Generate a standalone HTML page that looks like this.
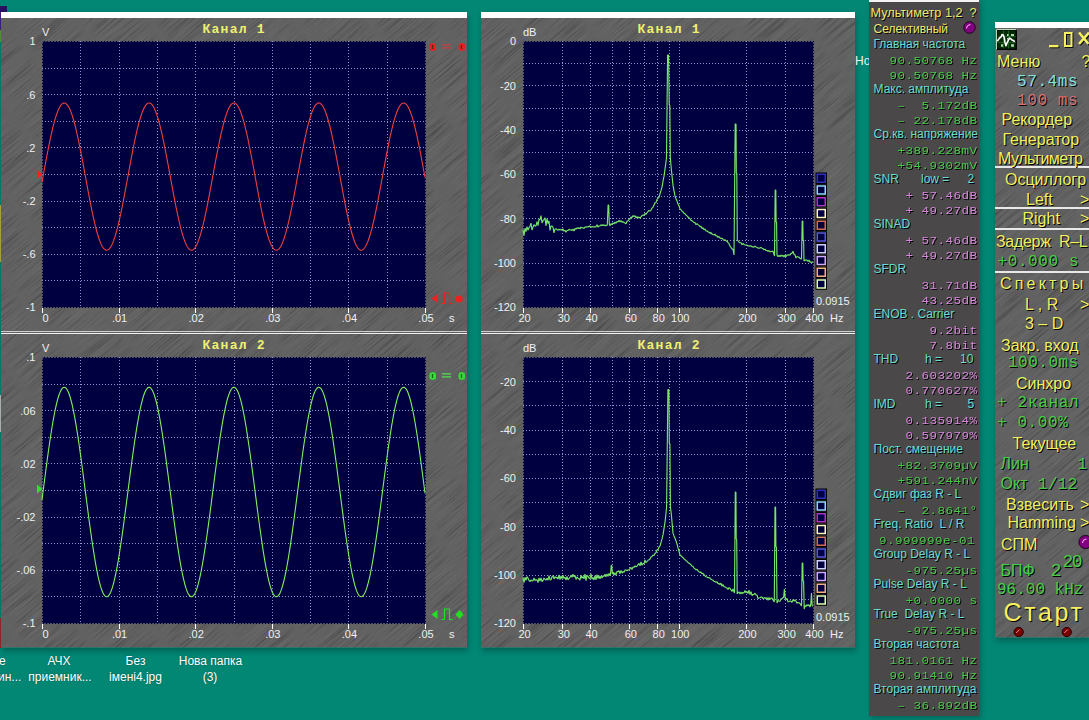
<!DOCTYPE html><html><head><meta charset="utf-8"><style>
*{margin:0;padding:0;box-sizing:border-box}
html,body{width:1089px;height:720px;overflow:hidden;background:#028775;position:relative;font-family:"Liberation Sans",sans-serif}
.a{position:absolute;white-space:pre;line-height:1}
.wb{background:#fff}
.sh{text-shadow:1px 1px 0 #000}
</style></head><body><div class="a" style="left:0px;top:6px;width:7px;height:6px;background:#2a1060"></div>
<div class="a" style="left:0px;top:12px;width:1.5px;height:18px;background:#40208a"></div>
<div class="a" style="left:0px;top:30px;width:1.5px;height:12px;background:#5a9a40"></div>
<div class="a" style="left:0px;top:205px;width:1.5px;height:57px;background:#b8b040"></div>
<div class="a" style="left:0px;top:395px;width:1.5px;height:37px;background:#b8c0c0"></div>
<div class="a" style="left:0px;top:618px;width:1.5px;height:30px;background:#a02828"></div>
<div class="a" style="left:1px;top:12px;width:466px;height:635.5px;box-shadow:1px 3px 6px rgba(0,0,0,.28)"></div>
<div class="a" style="left:481px;top:12px;width:374px;height:635.5px;box-shadow:1px 3px 6px rgba(0,0,0,.28)"></div>
<div class="a" style="left:995px;top:22px;width:94px;height:615.5px;box-shadow:1px 3px 6px rgba(0,0,0,.28)"></div>
<svg class="a" style="left:0;top:0" width="1089" height="720" viewBox="0 0 1089 720"><defs><filter id="brush" x="-600" y="-600" width="2400" height="2000" filterUnits="userSpaceOnUse" color-interpolation-filters="sRGB"><feTurbulence type="fractalNoise" baseFrequency="1.0 0.018" numOctaves="3" seed="4"/><feColorMatrix type="matrix" values="1 0 0 0 0  1 0 0 0 0  1 0 0 0 0  0 0 0 0 1"/><feComponentTransfer><feFuncR type="table" tableValues="0.2 0.315 0.385 0.412 0.432"/><feFuncG type="table" tableValues="0.2 0.315 0.385 0.412 0.432"/><feFuncB type="table" tableValues="0.2 0.315 0.385 0.412 0.432"/></feComponentTransfer></filter><clipPath id="cp"><rect x="1" y="18" width="466" height="629.5"/><rect x="481" y="18" width="374" height="629.5"/><rect x="995" y="28" width="94" height="609.5"/></clipPath></defs><g clip-path="url(#cp)"><g transform="rotate(50 544 360)"><rect x="-600" y="-600" width="2400" height="2000" filter="url(#brush)"/></g></g></svg>
<div class="a wb" style="left:1px;top:12px;width:466px;height:6px"></div>
<div class="a" style="left:1px;top:331px;width:466px;height:1px;background:#cfcfcf"></div>
<div class="a" style="left:1px;top:333px;width:466px;height:1px;background:#f0f0f0"></div>
<div class="a wb" style="left:481px;top:12px;width:374px;height:6px"></div>
<div class="a" style="left:481px;top:331px;width:374px;height:1px;background:#cfcfcf"></div>
<div class="a" style="left:481px;top:333px;width:374px;height:1px;background:#f0f0f0"></div>
<div class="a" style="top:26.65px;font-size:11px;color:#f0f0f0;left:42px;">V</div>
<div class="a" style="top:36.45px;font-size:11px;color:#f0f0f0;right:1053.5px;">1</div>
<div class="a" style="top:89.65px;font-size:11px;color:#f0f0f0;right:1053.5px;">.6</div>
<div class="a" style="top:142.85px;font-size:11px;color:#f0f0f0;right:1053.5px;">.2</div>
<div class="a" style="top:196.05px;font-size:11px;color:#f0f0f0;right:1053.5px;">-.2</div>
<div class="a" style="top:249.25px;font-size:11px;color:#f0f0f0;right:1053.5px;">-.6</div>
<div class="a" style="top:302.45px;font-size:11px;color:#f0f0f0;right:1053.5px;">-1</div>
<div class="a" style="top:313.15px;font-size:11px;color:#f0f0f0;left:42.5px;">0</div>
<div class="a" style="top:313.15px;font-size:11px;color:#f0f0f0;left:119.6px;transform:translateX(-50%);">.01</div>
<div class="a" style="top:313.15px;font-size:11px;color:#f0f0f0;left:196.2px;transform:translateX(-50%);">.02</div>
<div class="a" style="top:313.15px;font-size:11px;color:#f0f0f0;left:272.8px;transform:translateX(-50%);">.03</div>
<div class="a" style="top:313.15px;font-size:11px;color:#f0f0f0;left:349.4px;transform:translateX(-50%);">.04</div>
<div class="a" style="top:313.15px;font-size:11px;color:#f0f0f0;left:426px;transform:translateX(-50%);">.05</div>
<div class="a" style="top:313.15px;font-size:11px;color:#f0f0f0;left:449px;">s</div>
<div class="a" style="top:342.65px;font-size:11px;color:#f0f0f0;left:42px;">V</div>
<div class="a" style="top:352.45px;font-size:11px;color:#f0f0f0;right:1053.5px;">.1</div>
<div class="a" style="top:405.65px;font-size:11px;color:#f0f0f0;right:1053.5px;">.06</div>
<div class="a" style="top:458.85px;font-size:11px;color:#f0f0f0;right:1053.5px;">.02</div>
<div class="a" style="top:512.05px;font-size:11px;color:#f0f0f0;right:1053.5px;">-.02</div>
<div class="a" style="top:565.25px;font-size:11px;color:#f0f0f0;right:1053.5px;">-.06</div>
<div class="a" style="top:618.45px;font-size:11px;color:#f0f0f0;right:1053.5px;">-.1</div>
<div class="a" style="top:629.15px;font-size:11px;color:#f0f0f0;left:42.5px;">0</div>
<div class="a" style="top:629.15px;font-size:11px;color:#f0f0f0;left:119.6px;transform:translateX(-50%);">.01</div>
<div class="a" style="top:629.15px;font-size:11px;color:#f0f0f0;left:196.2px;transform:translateX(-50%);">.02</div>
<div class="a" style="top:629.15px;font-size:11px;color:#f0f0f0;left:272.8px;transform:translateX(-50%);">.03</div>
<div class="a" style="top:629.15px;font-size:11px;color:#f0f0f0;left:349.4px;transform:translateX(-50%);">.04</div>
<div class="a" style="top:629.15px;font-size:11px;color:#f0f0f0;left:426px;transform:translateX(-50%);">.05</div>
<div class="a" style="top:629.15px;font-size:11px;color:#f0f0f0;left:449px;">s</div>
<div class="a" style="top:23.12px;font-size:13px;color:#f0f070;font-family:'Liberation Mono',monospace;letter-spacing:1.25px;font-weight:bold;left:202.5px;">Канал 1</div>
<div class="a" style="top:23.12px;font-size:13px;color:#f0f070;font-family:'Liberation Mono',monospace;letter-spacing:1.25px;font-weight:bold;left:637.5px;">Канал 1</div>
<div class="a" style="top:339.12px;font-size:13px;color:#f0f070;font-family:'Liberation Mono',monospace;letter-spacing:1.25px;font-weight:bold;left:202.5px;">Канал 2</div>
<div class="a" style="top:339.12px;font-size:13px;color:#f0f070;font-family:'Liberation Mono',monospace;letter-spacing:1.25px;font-weight:bold;left:637.5px;">Канал 2</div>
<div class="a" style="top:313.15px;font-size:11px;color:#f0f0f0;left:524.5px;transform:translateX(-50%);">20</div>
<div class="a" style="top:313.15px;font-size:11px;color:#f0f0f0;left:563.75px;transform:translateX(-50%);">30</div>
<div class="a" style="top:313.15px;font-size:11px;color:#f0f0f0;left:591.6px;transform:translateX(-50%);">40</div>
<div class="a" style="top:313.15px;font-size:11px;color:#f0f0f0;left:630.85px;transform:translateX(-50%);">60</div>
<div class="a" style="top:313.15px;font-size:11px;color:#f0f0f0;left:658.7px;transform:translateX(-50%);">80</div>
<div class="a" style="top:313.15px;font-size:11px;color:#f0f0f0;left:680.3px;transform:translateX(-50%);">100</div>
<div class="a" style="top:313.15px;font-size:11px;color:#f0f0f0;left:747.4px;transform:translateX(-50%);">200</div>
<div class="a" style="top:313.15px;font-size:11px;color:#f0f0f0;left:786.65px;transform:translateX(-50%);">300</div>
<div class="a" style="top:313.15px;font-size:11px;color:#f0f0f0;left:814.5px;transform:translateX(-50%);">400</div>
<div class="a" style="top:313.15px;font-size:11px;color:#f0f0f0;left:830px;">Hz</div>
<div class="a" style="top:26.65px;font-size:11px;color:#f0f0f0;left:523px;">dB</div>
<div class="a" style="top:36.45px;font-size:11px;color:#f0f0f0;right:573px;">0</div>
<div class="a" style="top:80.78px;font-size:11px;color:#f0f0f0;right:573px;">-20</div>
<div class="a" style="top:125.12px;font-size:11px;color:#f0f0f0;right:573px;">-40</div>
<div class="a" style="top:169.45px;font-size:11px;color:#f0f0f0;right:573px;">-60</div>
<div class="a" style="top:213.78px;font-size:11px;color:#f0f0f0;right:573px;">-80</div>
<div class="a" style="top:258.12px;font-size:11px;color:#f0f0f0;right:573px;">-100</div>
<div class="a" style="top:302.45px;font-size:11px;color:#f0f0f0;right:573px;">-120</div>
<div class="a" style="top:295.65px;font-size:11px;color:#f0f0f0;left:816px;">0.0915</div>
<div class="a" style="top:629.15px;font-size:11px;color:#f0f0f0;left:524.5px;transform:translateX(-50%);">20</div>
<div class="a" style="top:629.15px;font-size:11px;color:#f0f0f0;left:563.75px;transform:translateX(-50%);">30</div>
<div class="a" style="top:629.15px;font-size:11px;color:#f0f0f0;left:591.6px;transform:translateX(-50%);">40</div>
<div class="a" style="top:629.15px;font-size:11px;color:#f0f0f0;left:630.85px;transform:translateX(-50%);">60</div>
<div class="a" style="top:629.15px;font-size:11px;color:#f0f0f0;left:658.7px;transform:translateX(-50%);">80</div>
<div class="a" style="top:629.15px;font-size:11px;color:#f0f0f0;left:680.3px;transform:translateX(-50%);">100</div>
<div class="a" style="top:629.15px;font-size:11px;color:#f0f0f0;left:747.4px;transform:translateX(-50%);">200</div>
<div class="a" style="top:629.15px;font-size:11px;color:#f0f0f0;left:786.65px;transform:translateX(-50%);">300</div>
<div class="a" style="top:629.15px;font-size:11px;color:#f0f0f0;left:814.5px;transform:translateX(-50%);">400</div>
<div class="a" style="top:629.15px;font-size:11px;color:#f0f0f0;left:830px;">Hz</div>
<div class="a" style="top:342.65px;font-size:11px;color:#f0f0f0;left:523px;">dB</div>
<div class="a" style="top:376.63px;font-size:11px;color:#f0f0f0;right:573px;">-20</div>
<div class="a" style="top:425px;font-size:11px;color:#f0f0f0;right:573px;">-40</div>
<div class="a" style="top:473.36px;font-size:11px;color:#f0f0f0;right:573px;">-60</div>
<div class="a" style="top:521.72px;font-size:11px;color:#f0f0f0;right:573px;">-80</div>
<div class="a" style="top:570.09px;font-size:11px;color:#f0f0f0;right:573px;">-100</div>
<div class="a" style="top:618.45px;font-size:11px;color:#f0f0f0;right:573px;">-120</div>
<div class="a" style="top:611.65px;font-size:11px;color:#f0f0f0;left:816px;">0.0915</div>
<div class="a" style="top:654.8px;font-size:12px;color:#ffffff;left:-1px;text-shadow:0 0 2px rgba(0,0,0,.35);">е</div>
<div class="a" style="top:670.8px;font-size:12px;color:#ffffff;left:-2px;text-shadow:0 0 2px rgba(0,0,0,.35);">ин...</div>
<div class="a" style="top:654.8px;font-size:12px;color:#fff;left:59px;transform:translateX(-50%);text-shadow:0 0 2px rgba(0,0,0,.35);">АЧХ</div>
<div class="a" style="top:670.8px;font-size:12px;color:#fff;left:60px;transform:translateX(-50%);text-shadow:0 0 2px rgba(0,0,0,.35);">приемник...</div>
<div class="a" style="top:654.8px;font-size:12px;color:#fff;left:135.5px;transform:translateX(-50%);text-shadow:0 0 2px rgba(0,0,0,.35);">Без</div>
<div class="a" style="top:670.8px;font-size:12px;color:#fff;left:135.5px;transform:translateX(-50%);text-shadow:0 0 2px rgba(0,0,0,.35);">імені4.jpg</div>
<div class="a" style="top:654.8px;font-size:12px;color:#fff;left:210.5px;transform:translateX(-50%);text-shadow:0 0 2px rgba(0,0,0,.35);">Нова папка</div>
<div class="a" style="top:670.8px;font-size:12px;color:#fff;left:210px;transform:translateX(-50%);text-shadow:0 0 2px rgba(0,0,0,.35);">(3)</div>
<div class="a" style="top:54.8px;font-size:12px;color:#e8f8f0;left:855px;">Но</div>
<div class="a" style="left:869px;top:0;width:110px;height:716px;background:#4a4849;box-shadow:2px 2px 5px rgba(0,0,0,.25)"></div>
<div class="a" style="left:869px;top:0;width:110px;height:2px;background:#f4f4f4"></div>
<div class="a sh" style="top:6.81px;font-size:12.7px;color:#f0e868;left:870.5px;">Мультиметр 1,2</div>
<div class="a sh" style="top:6.81px;font-size:12.7px;color:#f0e868;left:969.5px;">?</div>
<div class="a sh" style="top:23.1px;font-size:12px;color:#f0e868;left:873.5px;">Селективный</div>
<div class="a sh" style="top:38.1px;font-size:12px;color:#66dcd4;left:873.5px;">Главная частота</div>
<div class="a sh" style="top:54.62px;font-size:12.6px;color:#48cc48;font-family:'Liberation Mono',monospace;letter-spacing:0.45px;right:111.5px;transform:scaleY(0.92);transform-origin:0 9.58px;">90.50768 Hz</div>
<div class="a sh" style="top:69.62px;font-size:12.6px;color:#48cc48;font-family:'Liberation Mono',monospace;letter-spacing:0.45px;right:111.5px;transform:scaleY(0.92);transform-origin:0 9.58px;">90.50768 Hz</div>
<div class="a sh" style="top:83.1px;font-size:12px;color:#66dcd4;left:873.5px;">Макс. амплитуда</div>
<div class="a sh" style="top:99.62px;font-size:12.6px;color:#48cc48;font-family:'Liberation Mono',monospace;letter-spacing:0.45px;right:111.5px;transform:scaleY(0.92);transform-origin:0 9.58px;">–  5.172dB</div>
<div class="a sh" style="top:114.62px;font-size:12.6px;color:#48cc48;font-family:'Liberation Mono',monospace;letter-spacing:0.45px;right:111.5px;transform:scaleY(0.92);transform-origin:0 9.58px;">– 22.178dB</div>
<div class="a" style="left:873.5px;top:128.1px;width:104px;overflow:hidden;font-size:12px;color:#66dcd4;text-shadow:1px 1px 0 #000">Ср.кв. напряжение</div>
<div class="a sh" style="top:144.62px;font-size:12.6px;color:#48cc48;font-family:'Liberation Mono',monospace;letter-spacing:0.45px;right:111.5px;transform:scaleY(0.92);transform-origin:0 9.58px;">+389.228mV</div>
<div class="a sh" style="top:159.62px;font-size:12.6px;color:#48cc48;font-family:'Liberation Mono',monospace;letter-spacing:0.45px;right:111.5px;transform:scaleY(0.92);transform-origin:0 9.58px;">+54.9302mV</div>
<div class="a sh" style="top:173.1px;font-size:12px;color:#66dcd4;left:873.5px;">SNR</div>
<div class="a sh" style="top:173.1px;font-size:12px;color:#66dcd4;left:921px;">low =</div>
<div class="a sh" style="top:173.1px;font-size:12px;color:#66dcd4;left:967.5px;">2</div>
<div class="a sh" style="top:189.62px;font-size:12.6px;color:#dc88e0;font-family:'Liberation Mono',monospace;letter-spacing:0.45px;right:111.5px;transform:scaleY(0.92);transform-origin:0 9.58px;">+ 57.46dB</div>
<div class="a sh" style="top:204.62px;font-size:12.6px;color:#dc88e0;font-family:'Liberation Mono',monospace;letter-spacing:0.45px;right:111.5px;transform:scaleY(0.92);transform-origin:0 9.58px;">+ 49.27dB</div>
<div class="a sh" style="top:218.1px;font-size:12px;color:#66dcd4;left:873.5px;">SINAD</div>
<div class="a sh" style="top:234.62px;font-size:12.6px;color:#dc88e0;font-family:'Liberation Mono',monospace;letter-spacing:0.45px;right:111.5px;transform:scaleY(0.92);transform-origin:0 9.58px;">+ 57.46dB</div>
<div class="a sh" style="top:249.62px;font-size:12.6px;color:#dc88e0;font-family:'Liberation Mono',monospace;letter-spacing:0.45px;right:111.5px;transform:scaleY(0.92);transform-origin:0 9.58px;">+ 49.27dB</div>
<div class="a sh" style="top:263.1px;font-size:12px;color:#66dcd4;left:873.5px;">SFDR</div>
<div class="a sh" style="top:279.62px;font-size:12.6px;color:#dc88e0;font-family:'Liberation Mono',monospace;letter-spacing:0.45px;right:111.5px;transform:scaleY(0.92);transform-origin:0 9.58px;">31.71dB</div>
<div class="a sh" style="top:294.62px;font-size:12.6px;color:#dc88e0;font-family:'Liberation Mono',monospace;letter-spacing:0.45px;right:111.5px;transform:scaleY(0.92);transform-origin:0 9.58px;">43.25dB</div>
<div class="a sh" style="top:308.1px;font-size:12px;color:#66dcd4;left:873.5px;">ENOB . Carrier</div>
<div class="a sh" style="top:324.62px;font-size:12.6px;color:#dc88e0;font-family:'Liberation Mono',monospace;letter-spacing:0.45px;right:111.5px;transform:scaleY(0.92);transform-origin:0 9.58px;">9.2bit</div>
<div class="a sh" style="top:339.62px;font-size:12.6px;color:#dc88e0;font-family:'Liberation Mono',monospace;letter-spacing:0.45px;right:111.5px;transform:scaleY(0.92);transform-origin:0 9.58px;">7.8bit</div>
<div class="a sh" style="top:353.1px;font-size:12px;color:#66dcd4;left:873.5px;">THD</div>
<div class="a sh" style="top:353.1px;font-size:12px;color:#66dcd4;left:925px;">h =</div>
<div class="a sh" style="top:353.1px;font-size:12px;color:#66dcd4;left:960px;">10</div>
<div class="a sh" style="top:369.62px;font-size:12.6px;color:#dc88e0;font-family:'Liberation Mono',monospace;letter-spacing:0.45px;right:111.5px;transform:scaleY(0.92);transform-origin:0 9.58px;">2.603202%</div>
<div class="a sh" style="top:384.62px;font-size:12.6px;color:#dc88e0;font-family:'Liberation Mono',monospace;letter-spacing:0.45px;right:111.5px;transform:scaleY(0.92);transform-origin:0 9.58px;">0.770627%</div>
<div class="a sh" style="top:398.1px;font-size:12px;color:#66dcd4;left:873.5px;">IMD</div>
<div class="a sh" style="top:398.1px;font-size:12px;color:#66dcd4;left:925px;">h =</div>
<div class="a sh" style="top:398.1px;font-size:12px;color:#66dcd4;left:967.5px;">5</div>
<div class="a sh" style="top:414.62px;font-size:12.6px;color:#dc88e0;font-family:'Liberation Mono',monospace;letter-spacing:0.45px;right:111.5px;transform:scaleY(0.92);transform-origin:0 9.58px;">0.135914%</div>
<div class="a sh" style="top:429.62px;font-size:12.6px;color:#dc88e0;font-family:'Liberation Mono',monospace;letter-spacing:0.45px;right:111.5px;transform:scaleY(0.92);transform-origin:0 9.58px;">0.597979%</div>
<div class="a sh" style="top:443.1px;font-size:12px;color:#66dcd4;left:873.5px;">Пост. смещение</div>
<div class="a sh" style="top:459.62px;font-size:12.6px;color:#48cc48;font-family:'Liberation Mono',monospace;letter-spacing:0.45px;right:111.5px;transform:scaleY(0.92);transform-origin:0 9.58px;">+82.3709µV</div>
<div class="a sh" style="top:474.62px;font-size:12.6px;color:#48cc48;font-family:'Liberation Mono',monospace;letter-spacing:0.45px;right:111.5px;transform:scaleY(0.92);transform-origin:0 9.58px;">+591.244nV</div>
<div class="a sh" style="top:488.1px;font-size:12px;color:#66dcd4;left:873.5px;">Сдвиг фаз R - L</div>
<div class="a sh" style="top:504.62px;font-size:12.6px;color:#48cc48;font-family:'Liberation Mono',monospace;letter-spacing:0.45px;right:111.5px;transform:scaleY(0.92);transform-origin:0 9.58px;">–  2.8641°</div>
<div class="a sh" style="top:518.1px;font-size:12px;color:#66dcd4;left:873.5px;">Freq. Ratio  L / R</div>
<div class="a sh" style="top:534.62px;font-size:12.6px;color:#48cc48;font-family:'Liberation Mono',monospace;letter-spacing:0.45px;right:114px;transform:scaleY(0.92);transform-origin:0 9.58px;">9.999999e-01</div>
<div class="a sh" style="top:548.1px;font-size:12px;color:#66dcd4;left:873.5px;">Group Delay R - L</div>
<div class="a sh" style="top:564.62px;font-size:12.6px;color:#48cc48;font-family:'Liberation Mono',monospace;letter-spacing:0.45px;right:111.5px;transform:scaleY(0.92);transform-origin:0 9.58px;">-975.25µs</div>
<div class="a sh" style="top:578.1px;font-size:12px;color:#66dcd4;left:873.5px;">Pulse Delay R - L</div>
<div class="a sh" style="top:594.62px;font-size:12.6px;color:#48cc48;font-family:'Liberation Mono',monospace;letter-spacing:0.45px;right:111.5px;transform:scaleY(0.92);transform-origin:0 9.58px;">+0.0000 s</div>
<div class="a sh" style="top:608.1px;font-size:12px;color:#66dcd4;left:873.5px;">True  Delay R - L</div>
<div class="a sh" style="top:624.62px;font-size:12.6px;color:#48cc48;font-family:'Liberation Mono',monospace;letter-spacing:0.45px;right:111.5px;transform:scaleY(0.92);transform-origin:0 9.58px;">-975.25µs</div>
<div class="a sh" style="top:638.1px;font-size:12px;color:#66dcd4;left:873.5px;">Вторая частота</div>
<div class="a sh" style="top:654.62px;font-size:12.6px;color:#48cc48;font-family:'Liberation Mono',monospace;letter-spacing:0.45px;right:111.5px;transform:scaleY(0.92);transform-origin:0 9.58px;">181.0161 Hz</div>
<div class="a sh" style="top:669.62px;font-size:12.6px;color:#48cc48;font-family:'Liberation Mono',monospace;letter-spacing:0.45px;right:111.5px;transform:scaleY(0.92);transform-origin:0 9.58px;">90.91410 Hz</div>
<div class="a sh" style="top:683.1px;font-size:12px;color:#66dcd4;left:873.5px;">Вторая амплитуда</div>
<div class="a sh" style="top:699.62px;font-size:12.6px;color:#48cc48;font-family:'Liberation Mono',monospace;letter-spacing:0.45px;right:111.5px;transform:scaleY(0.92);transform-origin:0 9.58px;">– 36.892dB</div>
<div class="a wb" style="left:995px;top:22px;width:94px;height:6px"></div>
<div class="a" style="left:995px;top:166px;width:94px;height:2px;background:#e8e8e8"></div>
<div class="a" style="left:995px;top:207px;width:94px;height:2px;background:#e8e8e8"></div>
<div class="a" style="left:995px;top:228px;width:94px;height:2px;background:#e8e8e8"></div>
<div class="a" style="left:995px;top:271px;width:94px;height:2px;background:#e8e8e8"></div>
<div class="a sh" style="top:53.7px;font-size:16px;color:#f0f060;left:997px;">Меню</div>
<div class="a sh" style="top:53.7px;font-size:16px;color:#f0f060;left:1081.5px;">?</div>
<div class="a sh" style="top:74.34px;font-size:16px;color:#88e0e0;font-family:'Liberation Mono',monospace;letter-spacing:0.6px;left:1017px;">57.4ms</div>
<div class="a sh" style="top:93.34px;font-size:16px;color:#d87070;font-family:'Liberation Mono',monospace;letter-spacing:0.6px;left:1017px;">100 ms</div>
<div class="a sh" style="top:111.7px;font-size:16px;color:#f0f060;left:1001.5px;">Рекордер</div>
<div class="a sh" style="top:131.5px;font-size:16px;color:#f0f060;left:1002.5px;">Генератор</div>
<div class="a sh" style="left:998px;top:150.5px;font-size:16px;color:#f0f060;letter-spacing:-0.5px">Мультиметр</div>
<div class="a sh" style="top:171.7px;font-size:16px;color:#f0f060;left:1005px;">Осциллогр</div>
<div class="a sh" style="top:191.7px;font-size:16px;color:#f0f060;left:1026px;">Left</div>
<div class="a sh" style="top:191.7px;font-size:16px;color:#f0f060;left:1080px;">></div>
<div class="a sh" style="top:211.2px;font-size:16px;color:#f0f060;left:1022.5px;">Right</div>
<div class="a sh" style="top:211.2px;font-size:16px;color:#f0f060;left:1080px;">></div>
<div class="a sh" style="top:233.7px;font-size:16px;color:#f0f060;left:996px;letter-spacing:-0.3px;">Задерж  R–L</div>
<div class="a sh" style="top:254.34px;font-size:16px;color:#48cc48;font-family:'Liberation Mono',monospace;letter-spacing:0.6px;left:997.5px;">+0.000 s</div>
<div class="a sh" style="top:276.2px;font-size:16px;color:#f0f060;left:1000px;letter-spacing:3.2px;">Спектры</div>
<div class="a sh" style="top:296.7px;font-size:16px;color:#f0f060;left:1025px;">L , R</div>
<div class="a sh" style="top:296.7px;font-size:16px;color:#f0f060;left:1080px;">></div>
<div class="a sh" style="top:316.2px;font-size:16px;color:#f0f060;left:1025px;">3 – D</div>
<div class="a sh" style="top:337.7px;font-size:16px;color:#f0f060;left:1001px;">Закр. вход</div>
<div class="a sh" style="top:354.84px;font-size:16px;color:#48cc48;font-family:'Liberation Mono',monospace;letter-spacing:0.5px;left:1008px;">100.0ms</div>
<div class="a sh" style="top:376.2px;font-size:16px;color:#f0f060;left:1016px;">Синхро</div>
<div class="a sh" style="top:394.84px;font-size:16px;color:#48cc48;font-family:'Liberation Mono',monospace;letter-spacing:0.7px;left:997px;">+ 2канал</div>
<div class="a sh" style="top:414.84px;font-size:16px;color:#48cc48;font-family:'Liberation Mono',monospace;letter-spacing:0.6px;left:997px;">+ 0.00%</div>
<div class="a sh" style="top:436.2px;font-size:16px;color:#f0f060;left:1012.5px;">Текущее</div>
<div class="a sh" style="top:456.2px;font-size:16px;color:#48cc48;left:1000.5px;">Лин</div>
<div class="a sh" style="top:457.34px;font-size:16px;color:#48cc48;font-family:'Liberation Mono',monospace;left:1077.5px;">1</div>
<div class="a sh" style="top:476.2px;font-size:16px;color:#48cc48;left:1000.5px;">Окт</div>
<div class="a sh" style="top:477.34px;font-size:16px;color:#48cc48;font-family:'Liberation Mono',monospace;letter-spacing:0.3px;left:1038px;">1/12</div>
<div class="a sh" style="top:497.2px;font-size:16px;color:#f0f060;left:1006px;">Взвесить</div>
<div class="a sh" style="top:497.2px;font-size:16px;color:#f0f060;left:1080px;">></div>
<div class="a sh" style="top:515.2px;font-size:16px;color:#f0f060;left:1007.5px;">Hamming</div>
<div class="a sh" style="top:515.2px;font-size:16px;color:#f0f060;left:1080px;">></div>
<div class="a sh" style="top:536.9px;font-size:16px;color:#f0f060;left:1001px;">СПМ</div>
<div class="a sh" style="top:563.4px;font-size:16px;color:#48cc48;left:1000.5px;">БПФ</div>
<div class="a sh" style="top:563.14px;font-size:18.5px;color:#48cc48;font-family:'Liberation Mono',monospace;left:1050.5px;">2</div>
<div class="a sh" style="top:552.82px;font-size:18px;color:#48cc48;font-family:'Liberation Mono',monospace;letter-spacing:-1.6px;left:1062.5px;">20</div>
<div class="a sh" style="top:581.84px;font-size:16px;color:#48cc48;font-family:'Liberation Mono',monospace;left:997px;">96.00 kHz</div>
<div class="a sh" style="left:1003.5px;top:599.75px;font-size:25px;color:#f8f060;letter-spacing:2.6px">Старт</div>
<svg class="a" style="left:0;top:0" width="1089" height="720" viewBox="0 0 1089 720"><rect x="42" y="41" width="384" height="267" fill="#000040"/><path d="M42.5 41.5H425.5V307.5H42.5Z" stroke="#000018" stroke-width="1" fill="none"/><path d="M80.5 41V307M119.5 41V307M157.5 41V307M195.5 41V307M234.5 41V307M272.5 41V307M310.5 41V307M348.5 41V307M387.5 41V307M42 68.5H425M42 94.5H425M42 121.5H425M42 147.5H425M42 174.5H425M42 201.5H425M42 227.5H425M42 254.5H425M42 280.5H425" stroke="#9494cc" stroke-width="1" stroke-dasharray="1 2" fill="none"/><path d="M42.5 41.5H425.5V307.5H42.5Z" stroke="#9494cc" stroke-width="1" stroke-dasharray="1 2" fill="none"/><path d="M42.5 308V313M119.5 308V313M195.5 308V313M272.5 308V313M348.5 308V313M425.5 308V313" stroke="#fff" stroke-width="1" fill="none"/><path d="M42 182.04L42.5 179.32L43 176.6L43.5 173.88L44 171.16L44.5 168.44L45 165.74L45.5 163.05L46 160.38L46.5 157.74L47 155.12L47.5 152.53L48 149.97L48.5 147.45L49 144.97L49.5 142.53L50 140.14L50.5 137.8L51 135.51L51.5 133.27L52 131.1L52.5 128.99L53 126.95L53.5 124.97L54 123.06L54.5 121.23L55 119.47L55.5 117.8L56 116.2L56.5 114.68L57 113.25L57.5 111.91L58 110.65L58.5 109.49L59 108.42L59.5 107.44L60 106.55L60.5 105.77L61 105.07L61.5 104.48L62 103.99L62.5 103.59L63 103.3L63.5 103.1L64 103.01L64.5 103.02L65 103.12L65.5 103.33L66 103.64L66.5 104.05L67 104.56L67.5 105.17L68 105.87L68.5 106.68L69 107.57L69.5 108.57L70 109.65L70.5 110.83L71 112.1L71.5 113.45L72 114.9L72.5 116.42L73 118.03L73.5 119.72L74 121.49L74.5 123.34L75 125.25L75.5 127.24L76 129.29L76.5 131.41L77 133.6L77.5 135.84L78 138.13L78.5 140.48L79 142.88L79.5 145.32L80 147.81L80.5 150.34L81 152.9L81.5 155.5L82 158.12L82.5 160.77L83 163.44L83.5 166.13L84 168.84L84.5 171.55L85 174.27L85.5 177L86 179.72L86.5 182.44L87 185.15L87.5 187.85L88 190.54L88.5 193.2L89 195.84L89.5 198.46L90 201.05L90.5 203.6L91 206.12L91.5 208.59L92 211.02L92.5 213.41L93 215.74L93.5 218.02L94 220.24L94.5 222.41L95 224.51L95.5 226.54L96 228.51L96.5 230.41L97 232.23L97.5 233.97L98 235.64L98.5 237.23L99 238.73L99.5 240.15L100 241.48L100.5 242.72L101 243.87L101.5 244.93L102 245.9L102.5 246.77L103 247.54L103.5 248.22L104 248.8L104.5 249.28L105 249.66L105.5 249.94L106 250.12L106.5 250.2L107 250.17L107.5 250.05L108 249.83L108.5 249.5L109 249.08L109.5 248.56L110 247.94L110.5 247.22L111 246.4L111.5 245.49L112 244.48L112.5 243.38L113 242.19L113.5 240.91L114 239.54L114.5 238.09L115 236.55L115.5 234.92L116 233.22L116.5 231.44L117 229.59L117.5 227.66L118 225.67L118.5 223.6L119 221.47L119.5 219.28L120 217.03L120.5 214.73L121 212.37L121.5 209.97L122 207.52L122.5 205.02L123 202.49L123.5 199.92L124 197.32L124.5 194.69L125 192.04L125.5 189.37L126 186.68L126.5 183.97L127 181.25L127.5 178.53L128 175.81L128.5 173.08L129 170.37L129.5 167.66L130 164.96L130.5 162.28L131 159.61L131.5 156.97L132 154.36L132.5 151.78L133 149.23L133.5 146.72L134 144.25L134.5 141.83L135 139.45L135.5 137.12L136 134.85L136.5 132.64L137 130.48L137.5 128.39L138 126.37L138.5 124.41L139 122.52L139.5 120.71L140 118.98L140.5 117.32L141 115.75L141.5 114.26L142 112.85L142.5 111.53L143 110.31L143.5 109.17L144 108.12L144.5 107.17L145 106.31L145.5 105.55L146 104.89L146.5 104.33L147 103.86L147.5 103.5L148 103.23L148.5 103.07L149 103L149.5 103.04L150 103.18L150.5 103.41L151 103.75L151.5 104.19L152 104.73L152.5 105.36L153 106.1L153.5 106.93L154 107.85L154.5 108.87L155 109.99L155.5 111.19L156 112.48L156.5 113.87L157 115.33L157.5 116.88L158 118.52L158.5 120.23L159 122.02L159.5 123.89L160 125.82L160.5 127.83L161 129.9L161.5 132.04L162 134.24L162.5 136.5L163 138.81L163.5 141.17L164 143.59L164.5 146.04L165 148.54L165.5 151.08L166 153.65L166.5 156.26L167 158.89L167.5 161.55L168 164.22L168.5 166.92L169 169.62L169.5 172.34L170 175.06L170.5 177.79L171 180.51L171.5 183.23L172 185.94L172.5 188.63L173 191.31L173.5 193.97L174 196.61L174.5 199.22L175 201.79L175.5 204.33L176 206.84L176.5 209.3L177 211.72L177.5 214.09L178 216.41L178.5 218.67L179 220.88L179.5 223.03L180 225.11L180.5 227.12L181 229.07L181.5 230.94L182 232.74L182.5 234.47L183 236.11L183.5 237.67L184 239.15L184.5 240.54L185 241.85L185.5 243.07L186 244.19L186.5 245.22L187 246.16L187.5 247L188 247.75L188.5 248.4L189 248.95L189.5 249.4L190 249.75L190.5 250L191 250.15L191.5 250.2L192 250.15L192.5 250L193 249.74L193.5 249.39L194 248.94L194.5 248.39L195 247.74L195.5 246.99L196 246.14L196.5 245.2L197 244.17L197.5 243.04L198 241.83L198.5 240.52L199 239.13L199.5 237.65L200 236.08L200.5 234.44L201 232.71L201.5 230.91L202 229.04L202.5 227.09L203 225.07L203.5 222.99L204 220.84L204.5 218.63L205 216.37L205.5 214.05L206 211.68L206.5 209.26L207 206.8L207.5 204.29L208 201.75L208.5 199.17L209 196.56L209.5 193.93L210 191.27L210.5 188.59L211 185.89L211.5 183.18L212 180.46L212.5 177.74L213 175.02L213.5 172.29L214 169.58L214.5 166.87L215 164.18L215.5 161.5L216 158.84L216.5 156.21L217 153.61L217.5 151.04L218 148.5L218.5 146L219 143.54L219.5 141.13L220 138.77L220.5 136.46L221 134.2L221.5 132L222 129.87L222.5 127.8L223 125.79L223.5 123.85L224 121.99L224.5 120.2L225 118.49L225.5 116.86L226 115.31L226.5 113.84L227 112.46L227.5 111.17L228 109.97L228.5 108.85L229 107.84L229.5 106.91L230 106.08L230.5 105.35L231 104.72L231.5 104.18L232 103.74L232.5 103.41L233 103.17L233.5 103.04L234 103L234.5 103.07L235 103.23L235.5 103.5L236 103.87L236.5 104.34L237 104.9L237.5 105.57L238 106.33L238.5 107.19L239 108.14L239.5 109.19L240 110.33L240.5 111.56L241 112.88L241.5 114.28L242 115.78L242.5 117.35L243 119.01L243.5 120.74L244 122.56L244.5 124.44L245 126.4L245.5 128.43L246 130.52L246.5 132.67L247 134.89L247.5 137.16L248 139.49L248.5 141.87L249 144.3L249.5 146.77L250 149.28L250.5 151.82L251 154.41L251.5 157.02L252 159.66L252.5 162.32L253 165L253.5 167.7L254 170.41L254.5 173.13L255 175.86L255.5 178.58L256 181.3L256.5 184.02L257 186.72L257.5 189.41L258 192.09L258.5 194.74L259 197.37L259.5 199.97L260 202.53L260.5 205.07L261 207.56L261.5 210.01L262 212.41L262.5 214.77L263 217.07L263.5 219.32L264 221.51L264.5 223.64L265 225.7L265.5 227.7L266 229.62L266.5 231.48L267 233.25L267.5 234.95L268 236.57L268.5 238.11L269 239.57L269.5 240.93L270 242.21L270.5 243.4L271 244.5L271.5 245.5L272 246.41L272.5 247.23L273 247.95L273.5 248.57L274 249.09L274.5 249.51L275 249.83L275.5 250.05L276 250.18L276.5 250.2L277 250.11L277.5 249.93L278 249.65L278.5 249.27L279 248.79L279.5 248.21L280 247.53L280.5 246.75L281 245.88L281.5 244.91L282 243.85L282.5 242.7L283 241.46L283.5 240.12L284 238.71L284.5 237.2L285 235.61L285.5 233.94L286 232.2L286.5 230.37L287 228.48L287.5 226.51L288 224.47L288.5 222.37L289 220.21L289.5 217.98L290 215.7L290.5 213.37L291 210.98L291.5 208.55L292 206.07L292.5 203.56L293 201L293.5 198.42L294 195.8L294.5 193.16L295 190.49L295.5 187.8L296 185.1L296.5 182.39L297 179.67L297.5 176.95L298 174.22L298.5 171.5L299 168.79L299.5 166.09L300 163.4L300.5 160.73L301 158.08L301.5 155.45L302 152.86L302.5 150.29L303 147.77L303.5 145.28L304 142.84L304.5 140.44L305 138.09L305.5 135.8L306 133.56L306.5 131.38L307 129.26L307.5 127.21L308 125.22L308.5 123.3L309 121.46L309.5 119.7L310 118.01L310.5 116.4L311 114.87L311.5 113.43L312 112.08L312.5 110.81L313 109.63L313.5 108.55L314 107.56L314.5 106.66L315 105.86L315.5 105.16L316 104.55L316.5 104.04L317 103.64L317.5 103.33L318 103.12L318.5 103.02L319 103.01L319.5 103.11L320 103.3L320.5 103.6L321 103.99L321.5 104.49L322 105.09L322.5 105.78L323 106.57L323.5 107.45L324 108.43L324.5 109.51L325 110.67L325.5 111.93L326 113.28L326.5 114.71L327 116.22L327.5 117.82L328 119.5L328.5 121.26L329 123.1L329.5 125L330 126.98L330.5 129.03L331 131.14L331.5 133.31L332 135.55L332.5 137.84L333 140.18L333.5 142.57L334 145.01L334.5 147.49L335 150.01L335.5 152.57L336 155.16L336.5 157.78L337 160.43L337.5 163.1L338 165.79L338.5 168.49L339 171.2L339.5 173.92L340 176.65L340.5 179.37L341 182.09L341.5 184.8L342 187.51L342.5 190.19L343 192.86L343.5 195.51L344 198.13L344.5 200.72L345 203.27L345.5 205.8L346 208.28L346.5 210.71L347 213.1L347.5 215.44L348 217.73L348.5 219.96L349 222.13L349.5 224.24L350 226.29L350.5 228.26L351 230.17L351.5 232L352 233.76L352.5 235.43L353 237.03L353.5 238.54L354 239.97L354.5 241.31L355 242.57L355.5 243.73L356 244.8L356.5 245.78L357 246.66L357.5 247.45L358 248.14L358.5 248.73L359 249.22L359.5 249.61L360 249.91L360.5 250.1L361 250.19L361.5 250.18L362 250.07L362.5 249.86L363 249.55L363.5 249.14L364 248.63L364.5 248.02L365 247.31L365.5 246.51L366 245.61L366.5 244.62L367 243.53L367.5 242.35L368 241.08L368.5 239.72L369 238.28L369.5 236.75L370 235.14L370.5 233.45L371 231.68L371.5 229.83L372 227.91L372.5 225.92L373 223.87L373.5 221.75L374 219.57L374.5 217.32L375 215.03L375.5 212.68L376 210.28L376.5 207.83L377 205.34L377.5 202.82L378 200.25L378.5 197.66L379 195.03L379.5 192.38L380 189.71L380.5 187.02L381 184.32L381.5 181.6L382 178.88L382.5 176.16L383 173.43L383.5 170.71L384 168L384.5 165.3L385 162.62L385.5 159.95L386 157.31L386.5 154.69L387 152.11L387.5 149.56L388 147.04L388.5 144.57L389 142.14L389.5 139.75L390 137.42L390.5 135.14L391 132.92L391.5 130.75L392 128.66L392.5 126.62L393 124.66L393.5 122.76L394 120.94L394.5 119.2L395 117.53L395.5 115.95L396 114.44L396.5 113.03L397 111.7L397.5 110.46L398 109.31L398.5 108.25L399 107.29L399.5 106.42L400 105.65L400.5 104.97L401 104.39L401.5 103.92L402 103.54L402.5 103.26L403 103.08L403.5 103L404 103.03L404.5 103.15L405 103.38L405.5 103.7L406 104.13L406.5 104.65L407 105.28L407.5 106L408 106.82L408.5 107.73L409 108.74L409.5 109.84L410 111.03L410.5 112.31L411 113.68L411.5 115.14L412 116.68L412.5 118.3L413 120.01L413.5 121.79L414 123.64L414.5 125.57L415 127.57L415.5 129.64L416 131.76L416.5 133.96L417 136.21L417.5 138.51L418 140.87L418.5 143.27L419 145.73L419.5 148.22L420 150.75L420.5 153.32L421 155.92L421.5 158.55L422 161.2L422.5 163.88L423 166.57L423.5 169.28L424 171.99L424.5 174.71L425 177.44" stroke="#ec4040" stroke-width="1.1" fill="none"/><rect x="42" y="357" width="384" height="267" fill="#000040"/><path d="M42.5 357.5H425.5V623.5H42.5Z" stroke="#000018" stroke-width="1" fill="none"/><path d="M80.5 357V623M119.5 357V623M157.5 357V623M195.5 357V623M234.5 357V623M272.5 357V623M310.5 357V623M348.5 357V623M387.5 357V623M42 384.5H425M42 410.5H425M42 437.5H425M42 463.5H425M42 490.5H425M42 517.5H425M42 543.5H425M42 570.5H425M42 596.5H425" stroke="#9494cc" stroke-width="1" stroke-dasharray="1 2" fill="none"/><path d="M42.5 357.5H425.5V623.5H42.5Z" stroke="#9494cc" stroke-width="1" stroke-dasharray="1 2" fill="none"/><path d="M42.5 624V629M119.5 624V629M195.5 624V629M272.5 624V629M348.5 624V629M425.5 624V629" stroke="#fff" stroke-width="1" fill="none"/><path d="M42 499.75L42.5 495.88L43 492L43.5 488.12L44 484.25L44.5 480.39L45 476.55L45.5 472.73L46 468.93L46.5 465.17L47 461.44L47.5 457.76L48 454.12L48.5 450.53L49 447L49.5 443.53L50 440.13L50.5 436.8L51 433.54L51.5 430.37L52 427.28L52.5 424.28L53 421.37L53.5 418.55L54 415.84L54.5 413.24L55 410.74L55.5 408.35L56 406.07L56.5 403.92L57 401.88L57.5 399.97L58 398.19L58.5 396.53L59 395.01L59.5 393.61L60 392.35L60.5 391.23L61 390.25L61.5 389.41L62 388.7L62.5 388.14L63 387.72L63.5 387.45L64 387.31L64.5 387.32L65 387.48L65.5 387.77L66 388.21L66.5 388.8L67 389.52L67.5 390.38L68 391.39L68.5 392.53L69 393.81L69.5 395.22L70 396.76L70.5 398.44L71 400.24L71.5 402.17L72 404.22L72.5 406.4L73 408.69L73.5 411.09L74 413.61L74.5 416.23L75 418.96L75.5 421.78L76 424.71L76.5 427.72L77 430.82L77.5 434.01L78 437.28L78.5 440.62L79 444.03L79.5 447.51L80 451.05L80.5 454.64L81 458.29L81.5 461.98L82 465.71L82.5 469.48L83 473.28L83.5 477.11L84 480.95L84.5 484.82L85 488.69L85.5 492.56L86 496.44L86.5 500.31L87 504.16L87.5 508.01L88 511.82L88.5 515.62L89 519.38L89.5 523.1L90 526.78L90.5 530.41L91 533.99L91.5 537.51L92 540.97L92.5 544.36L93 547.68L93.5 550.92L94 554.09L94.5 557.16L95 560.15L95.5 563.05L96 565.85L96.5 568.54L97 571.13L97.5 573.62L98 575.99L98.5 578.25L99 580.38L99.5 582.4L100 584.29L100.5 586.06L101 587.7L101.5 589.21L102 590.58L102.5 591.82L103 592.92L103.5 593.88L104 594.7L104.5 595.39L105 595.93L105.5 596.33L106 596.58L106.5 596.69L107 596.66L107.5 596.49L108 596.17L108.5 595.71L109 595.11L109.5 594.36L110 593.48L110.5 592.45L111 591.29L111.5 590L112 588.56L112.5 587L113 585.31L113.5 583.48L114 581.54L114.5 579.47L115 577.28L115.5 574.97L116 572.55L116.5 570.02L117 567.38L117.5 564.64L118 561.8L118.5 558.86L119 555.83L119.5 552.72L120 549.52L120.5 546.24L121 542.89L121.5 539.47L122 535.98L122.5 532.43L123 528.83L123.5 525.18L124 521.48L124.5 517.74L125 513.97L125.5 510.16L126 506.33L126.5 502.48L127 498.62L127.5 494.75L128 490.87L128.5 487L129 483.13L129.5 479.28L130 475.44L130.5 471.62L131 467.84L131.5 464.08L132 460.36L132.5 456.69L133 453.07L133.5 449.5L134 445.98L134.5 442.54L135 439.15L135.5 435.84L136 432.61L136.5 429.46L137 426.4L137.5 423.42L138 420.54L138.5 417.76L139 415.07L139.5 412.5L140 410.03L140.5 407.68L141 405.44L141.5 403.32L142 401.32L142.5 399.44L143 397.69L143.5 396.07L144 394.59L144.5 393.23L145 392.01L145.5 390.93L146 389.99L146.5 389.19L147 388.53L147.5 388.01L148 387.63L148.5 387.39L149 387.3L149.5 387.35L150 387.55L150.5 387.89L151 388.37L151.5 388.99L152 389.76L152.5 390.66L153 391.71L153.5 392.89L154 394.2L154.5 395.65L155 397.24L155.5 398.95L156 400.79L156.5 402.76L157 404.84L157.5 407.05L158 409.37L158.5 411.81L159 414.36L159.5 417.01L160 419.77L160.5 422.62L161 425.57L161.5 428.61L162 431.74L162.5 434.95L163 438.24L163.5 441.6L164 445.04L164.5 448.53L165 452.09L165.5 455.7L166 459.36L166.5 463.06L167 466.81L167.5 470.58L168 474.39L168.5 478.22L169 482.08L169.5 485.94L170 489.81L170.5 493.69L171 497.56L171.5 501.43L172 505.28L172.5 509.12L173 512.93L173.5 516.71L174 520.46L174.5 524.17L175 527.84L175.5 531.45L176 535.02L176.5 538.52L177 541.96L177.5 545.33L178 548.63L178.5 551.85L179 554.99L179.5 558.04L180 561L180.5 563.87L181 566.64L181.5 569.31L182 571.87L182.5 574.32L183 576.66L183.5 578.88L184 580.98L184.5 582.96L185 584.82L185.5 586.55L186 588.15L186.5 589.62L187 590.95L187.5 592.15L188 593.21L188.5 594.13L189 594.92L189.5 595.56L190 596.06L190.5 596.42L191 596.63L191.5 596.7L192 596.63L192.5 596.41L193 596.05L193.5 595.55L194 594.91L194.5 594.12L195 593.19L195.5 592.13L196 590.93L196.5 589.59L197 588.12L197.5 586.52L198 584.79L198.5 582.93L199 580.95L199.5 578.84L200 576.62L200.5 574.28L201 571.82L201.5 569.26L202 566.59L202.5 563.82L203 560.95L203.5 557.99L204 554.94L204.5 551.8L205 548.57L205.5 545.27L206 541.9L206.5 538.46L207 534.96L207.5 531.39L208 527.77L208.5 524.11L209 520.4L209.5 516.65L210 512.86L210.5 509.05L211 505.22L211.5 501.36L212 497.5L212.5 493.62L213 489.75L213.5 485.87L214 482.01L214.5 478.16L215 474.33L215.5 470.52L216 466.74L216.5 463L217 459.29L217.5 455.63L218 452.02L218.5 448.47L219 444.98L219.5 441.54L220 438.18L220.5 434.9L221 431.69L221.5 428.56L222 425.52L222.5 422.57L223 419.72L223.5 416.97L224 414.31L224.5 411.77L225 409.33L225.5 407.01L226 404.81L226.5 402.72L227 400.76L227.5 398.92L228 397.21L228.5 395.63L229 394.18L229.5 392.87L230 391.69L230.5 390.65L231 389.74L231.5 388.98L232 388.36L232.5 387.88L233 387.54L233.5 387.35L234 387.3L234.5 387.4L235 387.63L235.5 388.01L236 388.54L236.5 389.2L237 390.01L237.5 390.95L238 392.03L238.5 393.26L239 394.61L239.5 396.1L240 397.72L240.5 399.47L241 401.35L241.5 403.35L242 405.47L242.5 407.71L243 410.07L243.5 412.54L244 415.12L244.5 417.8L245 420.59L245.5 423.47L246 426.45L246.5 429.51L247 432.67L247.5 435.9L248 439.21L248.5 442.59L249 446.04L249.5 449.56L250 453.13L250.5 456.76L251 460.43L251.5 464.15L252 467.9L252.5 471.69L253 475.5L253.5 479.34L254 483.2L254.5 487.07L255 490.94L255.5 494.82L256 498.69L256.5 502.55L257 506.4L257.5 510.23L258 514.03L258.5 517.81L259 521.54L259.5 525.24L260 528.89L260.5 532.5L261 536.04L261.5 539.53L262 542.95L262.5 546.3L263 549.57L263.5 552.77L264 555.89L264.5 558.91L265 561.85L265.5 564.69L266 567.43L266.5 570.06L267 572.59L267.5 575.01L268 577.32L268.5 579.5L269 581.57L269.5 583.52L270 585.34L270.5 587.03L271 588.59L271.5 590.02L272 591.31L272.5 592.47L273 593.49L273.5 594.38L274 595.12L274.5 595.72L275 596.18L275.5 596.49L276 596.66L276.5 596.69L277 596.58L277.5 596.32L278 595.92L278.5 595.38L279 594.69L279.5 593.87L280 592.9L280.5 591.8L281 590.56L281.5 589.18L282 587.67L282.5 586.03L283 584.26L283.5 582.37L284 580.35L284.5 578.21L285 575.95L285.5 573.58L286 571.09L286.5 568.5L287 565.8L287.5 563L288 560.1L288.5 557.11L289 554.03L289.5 550.87L290 547.62L290.5 544.3L291 540.91L291.5 537.45L292 533.93L292.5 530.35L293 526.71L293.5 523.03L294 519.31L294.5 515.55L295 511.76L295.5 507.94L296 504.1L296.5 500.24L297 496.37L297.5 492.5L298 488.62L298.5 484.75L299 480.89L299.5 477.04L300 473.22L300.5 469.42L301 465.65L301.5 461.92L302 458.22L302.5 454.58L303 450.99L303.5 447.45L304 443.97L304.5 440.56L305 437.22L305.5 433.96L306 430.77L306.5 427.67L307 424.65L307.5 421.73L308 418.91L308.5 416.18L309 413.56L309.5 411.05L310 408.65L310.5 406.36L311 404.19L311.5 402.14L312 400.21L312.5 398.41L313 396.74L313.5 395.19L314 393.78L314.5 392.51L315 391.37L315.5 390.37L316 389.51L316.5 388.79L317 388.21L317.5 387.77L318 387.47L318.5 387.32L319 387.31L319.5 387.45L320 387.73L320.5 388.15L321 388.71L321.5 389.42L322 390.27L322.5 391.25L323 392.38L323.5 393.64L324 395.03L324.5 396.56L325 398.22L325.5 400.01L326 401.92L326.5 403.96L327 406.11L327.5 408.39L328 410.78L328.5 413.28L329 415.89L329.5 418.6L330 421.42L330.5 424.33L331 427.33L331.5 430.42L332 433.6L332.5 436.85L333 440.19L333.5 443.59L334 447.06L334.5 450.59L335 454.18L335.5 457.82L336 461.5L336.5 465.23L337 469L337.5 472.79L338 476.62L338.5 480.46L339 484.32L339.5 488.19L340 492.07L340.5 495.94L341 499.81L341.5 503.67L342 507.51L342.5 511.34L343 515.13L343.5 518.9L344 522.62L344.5 526.31L345 529.95L345.5 533.53L346 537.06L346.5 540.53L347 543.93L347.5 547.26L348 550.51L348.5 553.69L349 556.78L349.5 559.78L350 562.68L350.5 565.49L351 568.2L351.5 570.81L352 573.31L352.5 575.69L353 577.96L353.5 580.12L354 582.15L354.5 584.06L355 585.84L355.5 587.5L356 589.02L356.5 590.41L357 591.67L357.5 592.78L358 593.77L358.5 594.61L359 595.31L359.5 595.87L360 596.28L360.5 596.56L361 596.69L361.5 596.68L362 596.52L362.5 596.22L363 595.78L363.5 595.19L364 594.47L364.5 593.6L365 592.59L365.5 591.45L366 590.17L366.5 588.76L367 587.21L367.5 585.53L368 583.72L368.5 581.79L369 579.74L369.5 577.56L370 575.27L370.5 572.87L371 570.35L371.5 567.72L372 565L372.5 562.17L373 559.24L373.5 556.23L374 553.12L374.5 549.93L375 546.67L375.5 543.32L376 539.91L376.5 536.43L377 532.89L377.5 529.3L378 525.65L378.5 521.96L379 518.22L379.5 514.45L380 510.65L380.5 506.83L381 502.98L381.5 499.12L382 495.25L382.5 491.37L383 487.49L383.5 483.63L384 479.77L384.5 475.93L385 472.11L385.5 468.32L386 464.56L386.5 460.84L387 457.16L387.5 453.53L388 449.95L388.5 446.43L389 442.97L389.5 439.58L390 436.26L390.5 433.02L391 429.86L391.5 426.78L392 423.8L392.5 420.9L393 418.11L393.5 415.41L394 412.82L394.5 410.34L395 407.97L395.5 405.72L396 403.58L396.5 401.57L397 399.67L397.5 397.91L398 396.27L398.5 394.77L399 393.4L399.5 392.16L400 391.06L400.5 390.1L401 389.28L401.5 388.6L402 388.06L402.5 387.67L403 387.41L403.5 387.31L404 387.34L404.5 387.52L405 387.84L405.5 388.3L406 388.9L406.5 389.65L407 390.54L407.5 391.56L408 392.73L408.5 394.03L409 395.46L409.5 397.03L410 398.72L410.5 400.55L411 402.5L411.5 404.57L412 406.76L412.5 409.07L413 411.49L413.5 414.03L414 416.67L414.5 419.41L415 422.25L415.5 425.19L416 428.22L416.5 431.34L417 434.54L417.5 437.82L418 441.17L418.5 444.59L419 448.08L419.5 451.63L420 455.23L420.5 458.89L421 462.58L421.5 466.32L422 470.1L422.5 473.9L423 477.73L423.5 481.58L424 485.45L424.5 489.32L425 493.19" stroke="#80f060" stroke-width="1.1" fill="none"/><path d="M37 170L42.5 174.5L37 179Z" fill="#ff2020"/><path d="M37 484.5L42.5 489L37 493.5Z" fill="#30e030"/><rect x="429.5" y="43.3" width="6.5" height="7.5" rx="2.5" fill="#e82020"/><path d="M442 44.8H451M442 47.8H451" stroke="#c84040" stroke-width="1.2"/><rect x="458.5" y="43.3" width="6.5" height="7.5" rx="2.5" fill="#e82020"/><path d="M432.5 45.0v4M461.5 45.0v4" stroke="#103010" stroke-width="1.3" opacity=".7"/><rect x="429.5" y="372.3" width="6.5" height="7.5" rx="2.5" fill="#30e030"/><path d="M442 373.8H451M442 376.8H451" stroke="#50e050" stroke-width="1.2"/><rect x="458.5" y="372.3" width="6.5" height="7.5" rx="2.5" fill="#30e030"/><path d="M432.5 374.0v4M461.5 374.0v4" stroke="#103010" stroke-width="1.3" opacity=".7"/><path d="M437.5 294 L431.5 298.5 L437.5 303 Z" fill="#f02020"/><path d="M441.5 303.5H444.5V293H449.5V303.5H452.5" stroke="#f02020" stroke-width="1.2" fill="none"/><circle cx="459" cy="299" r="3.6" fill="#f02020"/><path d="M437.5 610 L431.5 614.5 L437.5 619 Z" fill="#20e020"/><path d="M441.5 619.5H444.5V609H449.5V619.5H452.5" stroke="#20e020" stroke-width="1.2" fill="none"/><path d="M459.5 610 L463.5 614.5 L459.5 619 L455.5 614.5 Z" fill="#20e020"/><rect x="523" y="41" width="291" height="267" fill="#000040"/><path d="M523.5 41.5H813.5V307.5H523.5Z" stroke="#000018" stroke-width="1" fill="none"/><path d="M562.5 41V307M590.5 41V307M612.5 41V307M629.5 41V307M644.5 41V307M657.5 41V307M669.5 41V307M679.5 41V307M746.5 41V307M785.5 41V307M523 63.5H813M523 85.5H813M523 108.5H813M523 130.5H813M523 152.5H813M523 174.5H813M523 196.5H813M523 218.5H813M523 240.5H813M523 263.5H813M523 285.5H813" stroke="#9494cc" stroke-width="1" stroke-dasharray="1 2" fill="none"/><path d="M523.5 41.5H813.5V307.5H523.5Z" stroke="#9494cc" stroke-width="1" stroke-dasharray="1 2" fill="none"/><path d="M523.5 308V313M562.5 308V313M590.5 308V313M629.5 308V313M657.5 308V313M679.5 308V313M746.5 308V313M785.5 308V313M813.5 308V313" stroke="#fff" stroke-width="1" fill="none"/><rect x="815.5" y="172.5" width="11.5" height="11.5" fill="#000"/><rect x="816.5" y="173.5" width="9.5" height="9.5" fill="#3030c0"/><rect x="818" y="175" width="6.5" height="6.5" fill="#000040"/><rect x="815.5" y="184.25" width="11.5" height="11.5" fill="#000"/><rect x="816.5" y="185.25" width="9.5" height="9.5" fill="#90d8ff"/><rect x="818" y="186.75" width="6.5" height="6.5" fill="#000040"/><rect x="815.5" y="196" width="11.5" height="11.5" fill="#000"/><rect x="816.5" y="197" width="9.5" height="9.5" fill="#b030c8"/><rect x="818" y="198.5" width="6.5" height="6.5" fill="#000040"/><rect x="815.5" y="207.75" width="11.5" height="11.5" fill="#000"/><rect x="816.5" y="208.75" width="9.5" height="9.5" fill="#fff8c0"/><rect x="818" y="210.25" width="6.5" height="6.5" fill="#000040"/><rect x="815.5" y="219.5" width="11.5" height="11.5" fill="#000"/><rect x="816.5" y="220.5" width="9.5" height="9.5" fill="#d07050"/><rect x="818" y="222" width="6.5" height="6.5" fill="#000040"/><rect x="815.5" y="231.25" width="11.5" height="11.5" fill="#000"/><rect x="816.5" y="232.25" width="9.5" height="9.5" fill="#5858e0"/><rect x="818" y="233.75" width="6.5" height="6.5" fill="#000040"/><rect x="815.5" y="243" width="11.5" height="11.5" fill="#000"/><rect x="816.5" y="244" width="9.5" height="9.5" fill="#d0d0ff"/><rect x="818" y="245.5" width="6.5" height="6.5" fill="#000040"/><rect x="815.5" y="254.75" width="11.5" height="11.5" fill="#000"/><rect x="816.5" y="255.75" width="9.5" height="9.5" fill="#d0a8ff"/><rect x="818" y="257.25" width="6.5" height="6.5" fill="#000040"/><rect x="815.5" y="266.5" width="11.5" height="11.5" fill="#000"/><rect x="816.5" y="267.5" width="9.5" height="9.5" fill="#f0b080"/><rect x="818" y="269" width="6.5" height="6.5" fill="#000040"/><rect x="815.5" y="278.25" width="11.5" height="11.5" fill="#000"/><rect x="816.5" y="279.25" width="9.5" height="9.5" fill="#e0ffb0"/><rect x="818" y="280.75" width="6.5" height="6.5" fill="#000040"/><rect x="523" y="357" width="291" height="267" fill="#000040"/><path d="M523.5 357.5H813.5V623.5H523.5Z" stroke="#000018" stroke-width="1" fill="none"/><path d="M562.5 357V623M590.5 357V623M612.5 357V623M629.5 357V623M644.5 357V623M657.5 357V623M669.5 357V623M679.5 357V623M746.5 357V623M785.5 357V623M523 381.5H813M523 405.5H813M523 430.5H813M523 454.5H813M523 478.5H813M523 502.5H813M523 526.5H813M523 550.5H813M523 575.5H813M523 599.5H813" stroke="#9494cc" stroke-width="1" stroke-dasharray="1 2" fill="none"/><path d="M523.5 357.5H813.5V623.5H523.5Z" stroke="#9494cc" stroke-width="1" stroke-dasharray="1 2" fill="none"/><path d="M523.5 624V629M562.5 624V629M590.5 624V629M629.5 624V629M657.5 624V629M679.5 624V629M746.5 624V629M785.5 624V629M813.5 624V629" stroke="#fff" stroke-width="1" fill="none"/><rect x="815.5" y="488.5" width="11.5" height="11.5" fill="#000"/><rect x="816.5" y="489.5" width="9.5" height="9.5" fill="#3030c0"/><rect x="818" y="491" width="6.5" height="6.5" fill="#000040"/><rect x="815.5" y="500.25" width="11.5" height="11.5" fill="#000"/><rect x="816.5" y="501.25" width="9.5" height="9.5" fill="#90d8ff"/><rect x="818" y="502.75" width="6.5" height="6.5" fill="#000040"/><rect x="815.5" y="512" width="11.5" height="11.5" fill="#000"/><rect x="816.5" y="513" width="9.5" height="9.5" fill="#b030c8"/><rect x="818" y="514.5" width="6.5" height="6.5" fill="#000040"/><rect x="815.5" y="523.75" width="11.5" height="11.5" fill="#000"/><rect x="816.5" y="524.75" width="9.5" height="9.5" fill="#fff8c0"/><rect x="818" y="526.25" width="6.5" height="6.5" fill="#000040"/><rect x="815.5" y="535.5" width="11.5" height="11.5" fill="#000"/><rect x="816.5" y="536.5" width="9.5" height="9.5" fill="#d07050"/><rect x="818" y="538" width="6.5" height="6.5" fill="#000040"/><rect x="815.5" y="547.25" width="11.5" height="11.5" fill="#000"/><rect x="816.5" y="548.25" width="9.5" height="9.5" fill="#5858e0"/><rect x="818" y="549.75" width="6.5" height="6.5" fill="#000040"/><rect x="815.5" y="559" width="11.5" height="11.5" fill="#000"/><rect x="816.5" y="560" width="9.5" height="9.5" fill="#d0d0ff"/><rect x="818" y="561.5" width="6.5" height="6.5" fill="#000040"/><rect x="815.5" y="570.75" width="11.5" height="11.5" fill="#000"/><rect x="816.5" y="571.75" width="9.5" height="9.5" fill="#d0a8ff"/><rect x="818" y="573.25" width="6.5" height="6.5" fill="#000040"/><rect x="815.5" y="582.5" width="11.5" height="11.5" fill="#000"/><rect x="816.5" y="583.5" width="9.5" height="9.5" fill="#f0b080"/><rect x="818" y="585" width="6.5" height="6.5" fill="#000040"/><rect x="815.5" y="594.25" width="11.5" height="11.5" fill="#000"/><rect x="816.5" y="595.25" width="9.5" height="9.5" fill="#e0ffb0"/><rect x="818" y="596.75" width="6.5" height="6.5" fill="#000040"/><path d="M523 229.59L524 235.64L525 228.24L526 231.67L527 226.63L528 230.18L529 227.55L530 226.34L531 223.07L532 230.18L533 227.14L534 224.65L535 226.2L536 225.79L537 221.64L538 225.66L539 219.41L540 219.79L541 215.51L542 222.89L543 220.69L544 219.61L545 217.64L546 225.91L547 218.66L548 223.66L549 220.84L550 230.42L551 226.05L552 226.17L553 227.21L554 232.79L555 229.21L556 228.69L557 229.65L558 230.16L559 229.06L560 230.08L561 229.58L562 229.91L563 228.99L564 231.14L565 230.32L566 232.23L567 230.5L568 230.42L569 229.35L570 230.02L571 229.81L572 230.46L573 229.13L574 230.96L575 228.54L576 229.05L577 227.8L578 228.66L579 227.65L580 229.01L581 227.13L582 227.86L583 227.79L584 228.36L585 227.18L586 227.06L587 226.93L588 227.03L589 226.12L590 226.41L591 227.42L592 226.53L593 226.9L594 226.83L595 226.74L596 226.82L597 224.68L598 226.97L599 226.01L600 225.89L601 224.77L602 225.66L603 224.74L604 225.7L605 224.88L606 225.85L607.3 225L608.1 205L608.7 205L609.3 224L610 225.85L611 223.69L612 224.69L613 222.79L614 223.96L615 222.03L616 223.35L617 221.49L618 222.04L619 220.31L620 221.85L621 220.48L622 222.24L623 221.76L624 222.53L625 222.97L626 223.82L627 221.26L628 220.8L629 219.55L630 218.82L631 216.99L632 217.58L633 215.53L634 216.68L635 215.75L636 217.99L637 216.62L638 217.96L639 217.05L640 218.16L641 216.88L642 215.71L643 214.97L644 215.42L645 213.54L646 214.42L647 212.78L648 211.51L649 210.51L650 211.12L651 210.09L652 208.08L653 207.22L654 204.98L655 202.75L656 202.63L657 199.33L658 198.22L659 197.3L660 193.71L661 190.45L662 187.11L663 181.28L664 176.2L665 169.19L666.5 158L667.6 55L668.6 55L669.2 105L669.8 105L670.3 157L671.2 168L673 185.14L674 190.78L675 195.92L676 198.8L677 201.06L678 204.07L679 206.11L680 208.89L681 209.77L682 211.21L683 211.9L684 213.3L685 213.82L686 215.13L687 215.74L688 217.07L689 217.81L690 218.72L691 220.42L692 220.59L693 221.57L694 222.48L695 222.65L696 224.72L697 223.52L698 224.61L699 225.37L700 226.72L701 226.25L702 228.43L703 227.76L704 229.66L705 229.08L706 231L707 230.97L708 231.87L709 232.21L710 233.47L711 232.52L712 234.15L713 234.4L714 235.14L715 234.08L716 235.93L717 235.8L718 237.42L719 236.53L720 237.9L721 238.57L722 238.2L723 239.27L724 240.36L725 239.68L726 240.88L727 241.17L728 242.68L729 243.68L730 246.18L731 247.44L732 248.9L733 249.31L734 255L735.2 124L736 124L736.3 173L736.8 173L737.3 240L739 242.13L740 242.8L741 242.7L742 244.63L743 243.53L744 244.53L745 244.88L746 245.02L747 245.09L748 246L749 245.79L750 246.11L751 245.94L752 246.83L753 246.82L754 247.15L755 246.23L756 246.89L757 247.41L758 248.14L759 248.08L760 247.85L761 247.44L762 248.15L763 248.72L764 249.77L765 249.11L766 250.43L767 250.48L768 251.21L769 250.47L770 251.86L771 251.54L772 251.4L773 251.09L774.5 256L775.2 190L775.8 190L776.1 222L776.6 222L777 255L778 256.75L779 255.32L780 256.66L781 255.01L782 256.37L783 255.22L784 256.84L785 255.09L786 256.74L787 254.95L788 255.12L789 254.81L790 255.16L791 253.31L792 253.35L793 251.28L794 254.38L795 254.73L796 258L797 256.5L798 257.01L799 257.08L800 258.37L801.5 259L802.2 221L802.8 221L803.1 240L803.6 240L804 261L805 260.1L806 260.02L807 260.14L808 261.37L809 260.03L810 262.25L811 261.92L812 262.41L813 261.81" stroke="#78e468" stroke-width="1.15" fill="none" stroke-linejoin="bevel"/><path d="M523 577.69L524 582.75L525 577.24L526 580.43L527 576.55L528 578.17L529 580.61L530 581.7L531 579.84L532 580.83L533 580.82L534 578L535 580.5L536 579.81L537 579.8L538 582.54L539 577.79L540 581.15L541 577.93L542 581.48L543 580.47L544 578.09L545 579.28L546 580.14L547 578.18L548 580.14L549 575.72L550 579.96L551 579.76L552 576.77L553 575.7L554 578.89L555 576.7L556 577.95L557 577.13L558 579.19L559 574.86L560 579.51L561 575.95L562 578.77L563 575.11L564 578.52L565 577.1L566 580.13L567 576.33L568 579.89L569 578.49L570 577.38L571 575.22L572 577.21L573 574.31L574 576.81L575 575.4L576 579.43L577 576.9L578 578.15L579 578.99L580 580.12L581 575.14L582 578.27L583 576.48L584 578.76L585 573.98L586 580.68L587 575.4L588 576.35L589 578.11L590 578.85L591 573.94L592 579.15L593 577.56L594 579.92L595 575.57L596 579.85L597 574.65L598 578.61L599 575.7L600 578.77L601 575.82L602 577.94L603 575.75L604 576.6L605 574.3L606 576.74L607 573.92L608 576.31L609 573.32L610 575.96L610.5 574L611.3 565L611.8 566L612.3 574L613 571.84L614 575.03L615 572.83L616 575.28L617 571.31L618 571.82L619 570.61L620 573.71L621 570.37L622 573.12L623 571.52L624 572.22L625 570.06L626 569.78L627 570.87L628 569.78L629 569.99L630 568.71L631 567.39L632 569.59L633 566.87L634 567.51L635 565.86L636 566.78L637 566.28L638 564.56L639 563.47L640 565.77L641 562.02L642 565.26L643 563.45L644 563.91L645 559.88L646 562.72L647 561.5L648 560.28L649 559.74L650 558.94L651 557.03L652 556.58L653 555.02L654 555.54L655 553.47L656 552.7L657 549.78L658 549.84L659 547.04L660 546.08L661 542.41L662 538.91L663 534.95L664 528.61L665 522.12L666 512.94L666.6 507L667.9 389.5L668.9 389.5L669.3 443.7L669.9 443.7L670.4 507L671.2 513L673 533.15L674 535.9L675 538.2L676 540.99L677 543.85L678 547.91L679 551.24L680 555.16L681 555.69L682 556.82L683 557.61L684 558.96L685 559.57L686 560.69L687 561.24L688 562.55L689 563.16L690 563.84L691 564.79L692 566.26L693 566.33L694 568.08L695 568.87L696 569.68L697 569.39L698 570.89L699 571.74L700 572.4L701 572.08L702 573.7L703 573.39L704 574.66L705 575.96L706 576.77L707 577.05L708 577.64L709 577.61L710 578.2L711 579.31L712 579.79L713 580.24L714 581.29L715 581.69L716 582.32L717 581.83L718 583.85L719 583.29L720 584.57L721 583.07L722 586.3L723 584.47L724 586.64L725 586.94L726 587.54L727 588.09L728 589.41L729 587.62L730 588.34L731 589.82L732 591.59L733 589.02L734.5 593L735.3 492L735.9 492L736.2 539L736.7 539L737.2 594L738 592.4L739 592.11L740 593.98L741 592.06L742 593.8L743 592.42L744 592.9L745 590.42L746 592.66L747 591.55L748 593.51L749 590.16L750 594.63L751 591.65L752 595.48L753 594.5L754 594.4L755 593.22L756 594.93L757 595.12L758 598.48L759 598.09L760 597.68L761 597.01L762 597.13L763 598.67L764 598L765 597.61L766 598.91L767 597.52L768 600.36L769 597.48L770 599.41L771 598L772 598.11L774.3 602L775 507L775.6 507L775.9 547L776.4 547L777 603L778 600.63L779 601L780 601.33L781 598.74L782 598.77L783 597.22L783.6 598L784.4 589L785.2 598L786 599.67L787 598.48L788 601.89L789 601.55L790 601.04L791 601.29L792 602.27L793 599.64L794 601.16L795 599.76L796 601.2L797 603.12L798 602.58L799 602.73L800 603.53L801.5 606L802.2 563L802.8 563L803.1 581L803.6 581L804.2 609L805 605.58L806 606.5L807 604.47L808 605.91L809 604.64L810 607.15L810.8 604L811.5 593L812.2 606L813 606" stroke="#78e468" stroke-width="1.15" fill="none" stroke-linejoin="bevel"/></svg>
<svg class="a" style="left:0;top:0" width="1089" height="720" viewBox="0 0 1089 720"><circle cx="969.5" cy="27.5" r="5.8" fill="#800080" stroke="#1a0a1a" stroke-width="1"/><path d="M966.5 28.5Q967.0 25.0 970.5 24.5" stroke="#f0a0f0" stroke-width="1.2" fill="none"/><circle cx="1085.5" cy="542" r="6.6" fill="#800080" stroke="#1a0a1a" stroke-width="1"/><path d="M1082.5 543Q1083.0 539.5 1086.5 539" stroke="#f0a0f0" stroke-width="1.2" fill="none"/><circle cx="1018.7" cy="632" r="4.6" fill="#7a0000" stroke="#200000" stroke-width="1"/><path d="M1016.2 633L1019.7 629.5" stroke="#ff9090" stroke-width="1"/><circle cx="1066.8" cy="632" r="4.6" fill="#7a0000" stroke="#200000" stroke-width="1"/><path d="M1064.3 633L1067.8 629.5" stroke="#ff9090" stroke-width="1"/><rect x="996" y="29" width="21" height="21" fill="#000"/><path d="M996.5 49.5V29.5H1016.5" stroke="#b8dcb8" stroke-width="1" fill="none"/><rect x="997.5" y="30.5" width="18" height="18" fill="#062a06"/><path d="M1003.5 30.5V48.5M1008.5 30.5V48.5M997.5 36.5H1015.5M997.5 42.5H1015.5" stroke="#1c5c1c" stroke-width="1"/><path d="M1007 34h1.5v2h-1.5zM1011 34h3v2h-3zM1001 44.3h2v2.4h-2zM1011 44.3h3v2.4h-3zM1007 38h1.5v1.5h-1.5z" fill="#a8d8a8"/><path d="M997.3 41.3L999 38.7L1001.3 36.7L1002 34.5L1003.3 35L1004.3 38L1005 42.7L1006 45.7L1007.3 42.3L1008.3 40.3L1009.7 38L1011.7 39.7L1014 41L1014.8 41.8" stroke="#fff" stroke-width="1.6" fill="none" stroke-linejoin="round"/><g transform="translate(1 1)" opacity=".85"><rect x="1049" y="45" width="9.5" height="2.3" fill="#000"/><rect x="1065" y="33" width="6.5" height="13" fill="none" stroke="#000" stroke-width="2"/><path d="M1079 32.5L1088.5 44M1089 32.5L1079 44" stroke="#000" stroke-width="2.6"/></g><rect x="1049" y="45" width="9.5" height="2.3" fill="#f4f060"/><rect x="1065" y="33" width="6.5" height="13" fill="none" stroke="#f4f060" stroke-width="2"/><path d="M1079 32.5L1088.5 44M1089 32.5L1079 44" stroke="#f4f060" stroke-width="2.6"/></svg></body></html>
